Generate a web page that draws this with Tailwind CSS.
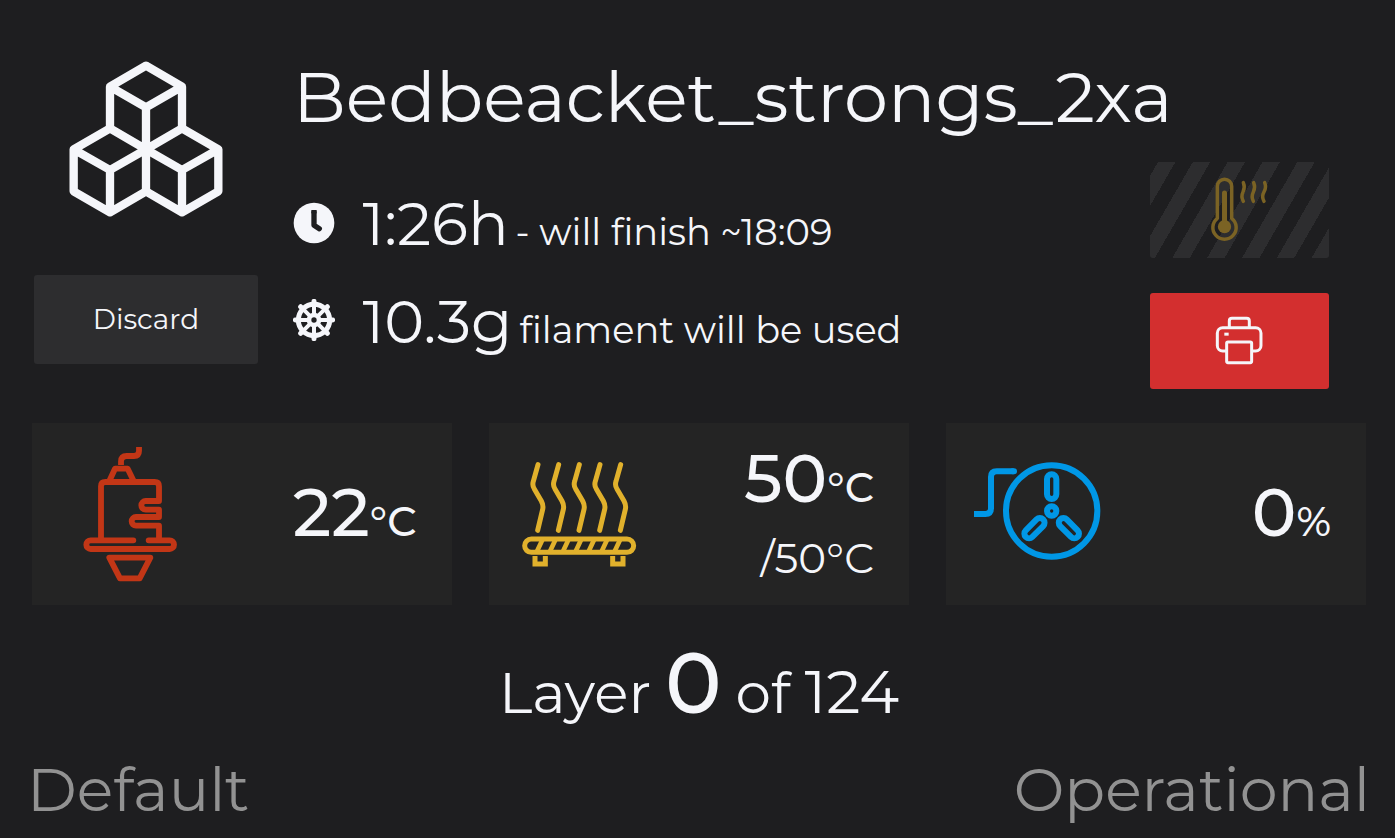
<!DOCTYPE html>
<html lang="en">
<head>
<meta charset="utf-8">
<title>Print job</title>
<script src="https://cdn.jsdelivr.net/npm/@tailwindcss/browser@4"></script>
</head>
<body class="bg-[#1e1e20]">
<main class="flex h-[838px] w-[1395px] flex-col overflow-hidden bg-[#1e1e20] font-[Montserrat,Inter,sans-serif] leading-none whitespace-nowrap text-[#f5f6fa]">

  <header class="flex h-[423px] shrink-0">
    <div class="flex w-[293px] shrink-0 flex-col pt-[45px] pl-[34px]">
      <svg class="ml-4 size-[190px]" viewBox="0 0 570 570" fill="none" stroke="currentColor" stroke-width="25" stroke-linejoin="round">
        <path d="M288 62 396 125V250L288 313 180 250V125ZM180 125 288 187 396 125M288 187V438"/>
        <path d="M180 250 71 313V439L180 502 288 439 396 502 505 439V313L396 250M71 313 180 375 288 313 396 375 505 313M180 375V502M396 375V502"/>
      </svg>
      <button class="mt-10 flex h-[89px] w-[224px] items-center justify-center rounded-[3px] bg-[#2d2d2f] pb-0.5 text-[28px]">Discard</button>
    </div>

    <div class="w-[857px] shrink-0 pt-[62px]">
      <h1 class="h-[70px] text-[70.1px]">Bedbeacket_strongs_2xa</h1>
      <div class="mt-[62px] flex h-[60px] items-baseline">
        <svg class="mt-2 size-[42px] shrink-0 self-start" viewBox="39 66 126 126">
          <circle cx="102" cy="129" r="61" fill="currentColor"/>
          <path d="M102 98V136L118 146" fill="none" stroke="#1e1e20" stroke-width="16" stroke-linecap="round" stroke-linejoin="round"/>
          <path d="M94 90h16v10h-16Z" fill="#1e1e20"/>
        </svg>
        <span class="ml-[27.5px] w-[153px] text-[60.3px]">1:26h</span>
        <span class="text-[36.8px]">- will finish ~18:09</span>
      </div>
      <div class="mt-[38px] flex h-[60px] items-baseline">
        <svg class="mt-[7px] size-[42px] shrink-0 self-start" viewBox="-63 -63 126 126" fill="none" stroke="currentColor" stroke-linecap="round">
          <circle r="47" stroke-width="15"/>
          <circle r="15" stroke-width="14"/>
          <path stroke-width="12" d="M0-50V-18M0 50V18M-50 0H-18M50 0H18M-35-35-13-13M35-35 13-13M-35 35-13 13M35 35 13 13"/>
          <path stroke-width="15" d="M0-56V-50M0 56V50M-56 0H-50M56 0H50M-40-40-35-35M40-40 35-35M-40 40-35 35M40 40 35 35"/>
        </svg>
        <span class="ml-[27.5px] w-[157px] text-[60.3px]">10.3g</span>
        <span class="text-[36.7px]">filament will be used</span>
      </div>
    </div>

    <div class="flex w-[179px] shrink-0 flex-col gap-[35px] pt-[162px]">
      <button aria-label="Preheat" class="flex h-24 items-center justify-center rounded-[3px] bg-[repeating-linear-gradient(-60deg,#2d2d2f_0px,#2d2d2f_15.08px,#1e1e20_15.08px,#1e1e20_30.17px)] text-[#7b6324]">
        <svg class="h-[73.3px] w-[66.7px]" viewBox="228 70 200 220" fill="none" stroke="currentColor" stroke-width="10.500" stroke-linecap="round">
          <path d="M262 204V110a21.500 21.500 0 0 1 43 0V204a35 35 0 1 1-43 0Z" stroke="none"/>
          <path d="M262 206V110a21.500 21.500 0 0 1 43 0V206a35 35 0 1 1-43 0" stroke-linejoin="round"/>
          <path d="M283.500 130V231" stroke-width="15"/>
          <circle cx="283.500" cy="231" r="20" fill="currentColor" stroke="none"/>
          <path d="M340 99q6 14-1 28t1 28M371 99q6 14-1 28t0 28M404 99q6 14-2 28t0 28"/>
        </svg>
      </button>
      <button aria-label="Print" class="flex h-24 items-center justify-center rounded-[3px] bg-[#d32f2f]">
        <svg class="size-[53.3px]" viewBox="249 491 160 160" fill="none" stroke="currentColor" stroke-width="9">
          <path d="M298 531V512q0-8 8-8h44q8 0 8 8v19M290 602h-12a16 16 0 0 1-16-16v-38a16 16 0 0 1 16-16h99a16 16 0 0 1 16 16v38a16 16 0 0 1-16 16h-12"/>
          <rect x="290" y="575" width="75" height="62" rx="4"/>
          <path d="M283 551.500h13"/>
        </svg>
      </button>
    </div>
  </header>

  <section class="flex h-[182px] shrink-0 gap-[37px] pl-8">
    <div class="flex w-[420px] justify-between bg-[#242424] pr-[35.5px]">
      <svg class="mt-3 ml-[38px] h-[155px] w-[120px] shrink-0" viewBox="0 0 360 465" fill="none" stroke="#c23616" stroke-width="17.500" stroke-linejoin="round">
        <path d="M153 90V80q0-17 17-17h22q15 0 15-15V36M118 138 135 101h38L191 138"/>
        <path d="M93 314V154q0-13 13-13H254q13 0 13 13v44H227a13 13 0 0 0 0 26h40v22H198a13 13 0 0 0 0 26h69v43"/>
        <path d="M190 316H62a13 13 0 0 0 0 26H299a13 13 0 0 0 0-26H236" stroke-linecap="round"/>
        <path d="M118 368H241L209 430H150Z"/>
      </svg>
      <div class="mt-[55.5px] flex items-baseline self-start font-medium">
        <span class="text-[67px]">22</span>
        <span class="text-[41px]">°C</span>
      </div>
    </div>

    <div class="flex w-[420px] justify-between bg-[#242424] pr-[35px]">
      <svg class="mt-[27px] ml-[21px] h-[130px] w-[140px] shrink-0" viewBox="0 0 420 390" fill="none" stroke="#e1b12c" stroke-width="15">
        <path stroke-linecap="round" d="M84 44 70 94Q66 106 73 117L94 153Q101 166 98 178L83 241M146 44 132 94Q128 106 135 117L156 153Q163 166 160 178L145 241M208 44 194 94Q190 106 197 117L218 153Q225 166 222 178L207 241M270 44 256 94Q252 106 259 117L280 153Q287 166 284 178L269 241M332 44 318 94Q314 106 321 117L342 153Q349 166 346 178L331 241"/>
        <rect x="44" y="267" width="327" height="40" rx="20"/>
        <path d="M98 268 80 306M137 268 119 306M176 268 158 306M214 268 196 306M253 268 235 306M292 268 274 306M331 268 313 306" stroke-width="14"/>
        <path d="M75 318V342H106V318M308 318V342H339V318"/>
      </svg>
      <div class="mt-[21.5px] flex flex-col items-end self-start">
        <div class="flex h-[67px] items-baseline font-medium">
          <span class="text-[67px]">50</span>
          <span class="text-[41px]">°C</span>
        </div>
        <div class="mt-[25px] text-[42px]">/50°C</div>
      </div>
    </div>

    <div class="flex w-[420px] justify-between bg-[#242424] pr-[35px]">
      <svg class="mt-[27px] ml-[14px] h-[120px] w-[150px] shrink-0" viewBox="0 0 450 360" fill="none" stroke="#0097e6" stroke-width="18">
        <path d="M42 192H76q17 0 17-17V81q0-17 17-17h51"/>
        <path d="M158 64h4" stroke-linecap="round"/>
        <circle cx="275" cy="183" r="137"/>
        <circle cx="275" cy="183" r="14"/>
        <rect x="261" y="73" width="28" height="74" rx="14"/>
        <rect x="261" y="73" width="28" height="74" rx="14" transform="rotate(135 275 183)"/>
        <rect x="261" y="73" width="28" height="74" rx="14" transform="rotate(225 275 183)"/>
      </svg>
      <div class="mt-[55.5px] flex items-baseline self-start font-medium">
        <span class="text-[67px]">0</span>
        <span class="text-[41px]">%</span>
      </div>
    </div>
  </section>

  <section class="mt-[35px] ml-[499px] flex h-[85px] shrink-0 items-baseline text-[56.5px]">
    <span class="w-[166px]">Layer</span>
    <span class="w-[70.5px] text-[85px] font-medium">0</span>
    <span class="w-[69px]">of</span>
    <span class="text-[60.3px]">124</span>
  </section>

  <footer class="mt-[35px] flex shrink-0 justify-between pr-[25px] pl-[27px] text-[60.3px] text-[#929292]">
    <span>Default</span>
    <span>Operational</span>
  </footer>
</main>
</body>
</html>
